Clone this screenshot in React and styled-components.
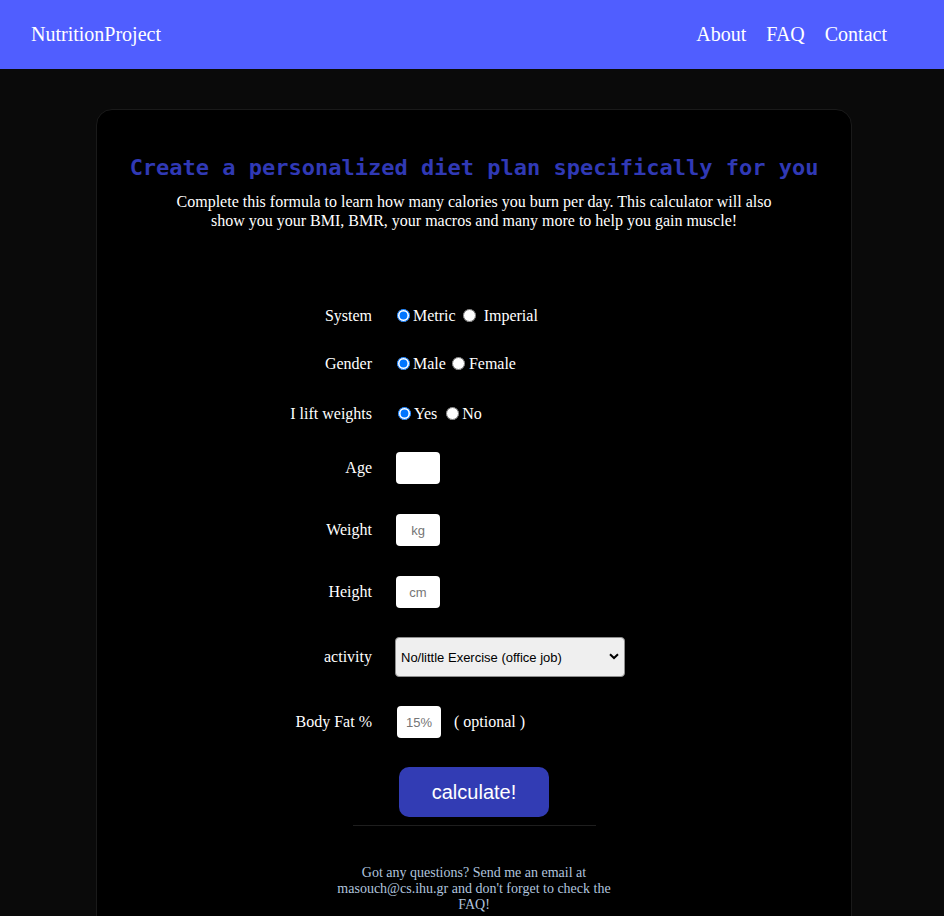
import React from 'react'
import styled, { createGlobalStyle } from 'styled-components'

const GlobalStyle = createGlobalStyle`
  body {
    margin: 0;
    background: #0a0a0a;
    font-family: "Liberation Serif", "Times New Roman", serif;
    color: #fff;
  }
`

const Nav = styled.nav`
  height: 69px;
  background: #505eff;
  display: flex;
  align-items: center;
  justify-content: space-between;
  padding: 0 57px 0 31px;
  font-size: 20px;
`

const Brand = styled.a`
  color: #fff;
  text-decoration: none;
`

const Links = styled.div`
  display: flex;
  gap: 20px;
`

const NavLink = styled.a`
  color: #fff;
  text-decoration: none;
`

const Card = styled.main`
  width: 756px;
  box-sizing: border-box;
  margin: 40px 0 0 96px;
  min-height: 900px;
  background: #000;
  border: 1px solid #1a1a1a;
  border-radius: 16px;
  display: flex;
  flex-direction: column;
  align-items: center;
  padding-top: 45px;
`

const Title = styled.h1`
  margin: 0;
  font-family: "DejaVu Sans Mono", monospace;
  font-weight: bold;
  font-size: 22px;
  line-height: 26px;
  color: #3039b5;
  text-align: center;
`

const Intro = styled.p`
  margin: 11px 0 0;
  width: 600px;
  font-size: 16px;
  line-height: 19px;
  text-align: center;
`

const Form = styled.form`
  align-self: flex-start;
  margin: 62px 0 0 155px;
  display: grid;
  grid-template-columns: 120px 300px;
  column-gap: 20px;
`

const Label = styled.label`
  height: ${props => props.h}px;
  display: flex;
  align-items: center;
  justify-content: flex-end;
  font-size: 16px;
  white-space: nowrap;
`

const Control = styled.div`
  height: ${props => props.h}px;
  display: flex;
  align-items: center;
  font-size: 16px;
  white-space: pre;
`

const Radio = styled.input.attrs({ type: 'radio' })`
  width: 13px;
  height: 13px;
  margin: 0 ${props => props.mr || 3}px 2px ${props => props.ml || 5}px;
`

const NumInput = styled.input`
  width: 44px;
  height: 32px;
  box-sizing: border-box;
  margin-left: ${props => props.ml || 4}px;
  border: none;
  border-radius: 4px;
  background: #fff;
  font-family: "Liberation Sans", Arial, sans-serif;
  font-size: 13px;
  text-align: center;
  padding: 0;
  &::placeholder {
    color: #757575;
  }
`

const SelectWrap = styled.div`
  position: relative;
  margin-left: 3px;
`

const Select = styled.select`
  appearance: none;
  width: 230px;
  height: 40px;
  box-sizing: border-box;
  background: #efefef;
  border: 1px solid #8f8f8f;
  border-radius: 4px;
  padding: 0 0 0 5px;
  font-family: "Liberation Sans", Arial, sans-serif;
  font-size: 13px;
  color: #000;
`

const Chevron = styled.svg`
  position: absolute;
  right: 6px;
  top: 16px;
  pointer-events: none;
`

const Optional = styled.span`
  margin-left: 13px;
`

const Button = styled.button`
  margin-top: 17px;
  width: 150px;
  height: 50px;
  border: none;
  border-radius: 10px;
  background: #323cb4;
  color: #fff;
  font-family: "Liberation Sans", Arial, sans-serif;
  font-size: 20px;
  cursor: pointer;
`

const Rule = styled.hr`
  width: 243px;
  margin: 8px 0 0;
  border: none;
  border-top: 1px solid #1e1e1e;
`

const Footer = styled.p`
  margin: 39px 0 0;
  width: 290px;
  font-size: 14px;
  line-height: 16px;
  text-align: center;
  color: #b0c4de;
`

const rows = [
  { label: 'System', h: 48 },
  { label: 'Gender', h: 48 },
  { label: 'I lift weights', h: 52 },
  { label: 'Age', h: 56 },
  { label: 'Weight', h: 68 },
  { label: 'Height', h: 56 },
  { label: 'activity', h: 74 },
  { label: 'Body Fat %', h: 56 },
]

const App = () => {
  const controls = [
    <>
      <Radio name="system" defaultChecked />Metric<Radio name="system" ml={7} mr={4} /> Imperial
    </>,
    <>
      <Radio name="gender" defaultChecked />Male<Radio name="gender" ml={6} mr={4} />Female
    </>,
    <>
      <Radio name="lift" defaultChecked ml={6} />Yes<Radio name="lift" ml={9} />No
    </>,
    <NumInput type="text" />,
    <NumInput type="text" placeholder="kg" />,
    <NumInput type="text" placeholder="cm" />,
    <SelectWrap>
      <Select defaultValue="1">
        <option value="1">No/little Exercise (office job)</option>
        <option value="2">Light Exercise (1-3 days/week)</option>
        <option value="3">Moderate Exercise (3-5 days/week)</option>
        <option value="4">Heavy Exercise (6-7 days/week)</option>
      </Select>
      <Chevron width="10" height="7" viewBox="0 0 10 7">
        <path d="M1 1.2 L5 5 L9 1.2" fill="none" stroke="#000" strokeWidth="2" />
      </Chevron>
    </SelectWrap>,
    <>
      <NumInput type="text" placeholder="15%" ml={5} />
      <Optional>( optional )</Optional>
    </>,
  ]

  return (
    <>
      <GlobalStyle />
      <Nav>
        <Brand href="#">NutritionProject</Brand>
        <Links>
          <NavLink href="#">About</NavLink>
          <NavLink href="#">FAQ</NavLink>
          <NavLink href="#">Contact</NavLink>
        </Links>
      </Nav>
      <Card>
        <Title>Create a personalized diet plan specifically for you</Title>
        <Intro>
          Complete this formula to learn how many calories you burn per day. This calculator will also
          show you your BMI, BMR, your macros and many more to help you gain muscle!
        </Intro>
        <Form onSubmit={e => e.preventDefault()}>
          {rows.map((row, i) => (
            <React.Fragment key={row.label}>
              <Label h={row.h}>{row.label}</Label>
              <Control h={row.h}>{controls[i]}</Control>
            </React.Fragment>
          ))}
        </Form>
        <Button type="button">calculate!</Button>
        <Rule />
        <Footer>
          Got any questions? Send me an email at masouch@cs.ihu.gr and don't forget to check the FAQ!
        </Footer>
      </Card>
    </>
  )
}

export default App
